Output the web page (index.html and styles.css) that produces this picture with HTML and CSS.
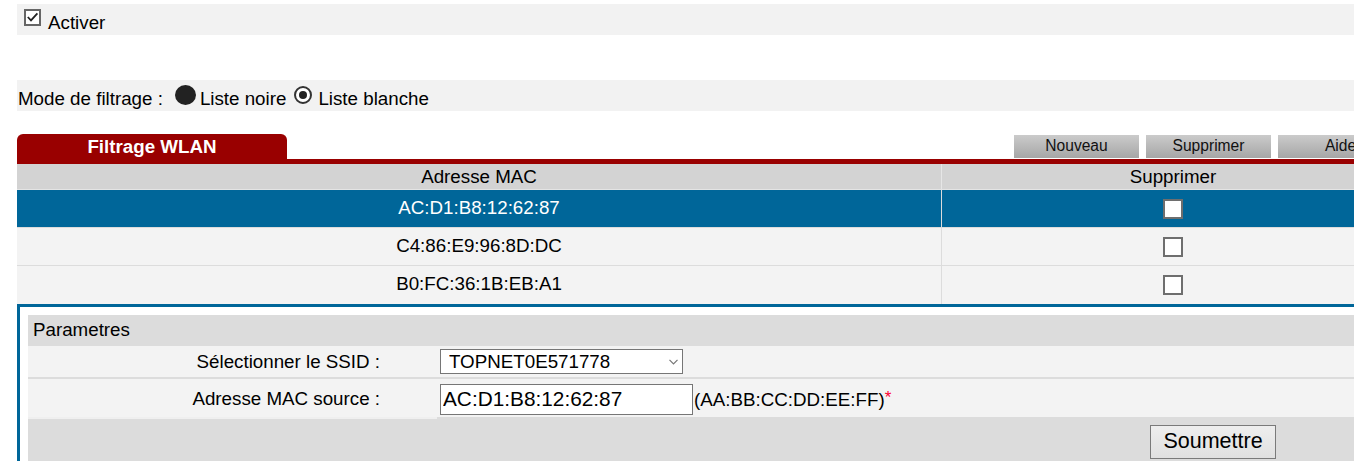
FILE: index.html
```html
<!DOCTYPE html>
<html lang="fr">
<head>
<meta charset="utf-8">
<title>Filtrage WLAN</title>
<link rel="stylesheet" href="styles.css">
</head>
<body>
<div class="page">
  <div class="band band-enable">
    <span class="check"><svg viewBox="0 0 13 13" width="13" height="13"><path d="M1.8 6 L5 9.4 L11.4 2.4" fill="none" stroke="#222" stroke-width="1.8"/></svg></span>
    <span class="band-text">Activer</span>
  </div>

  <div class="band band-mode">
    <span class="band-text">Mode de filtrage :</span>
    <span class="radio-black"></span>
    <span class="band-text lbl-noire">Liste noire</span>
    <span class="radio-sel"><span class="radio-dot"></span></span>
    <span class="band-text lbl-blanche">Liste blanche</span>
  </div>

  <div class="tabbar">
    <div class="tab">Filtrage WLAN</div>
    <div class="tools">
      <button class="tool-btn" type="button">Nouveau</button>
      <button class="tool-btn" type="button">Supprimer</button>
      <button class="tool-btn" type="button">Aide</button>
    </div>
  </div>
  <div class="redbar"></div>

  <div class="list">
    <div class="list-row list-head">
      <div class="cell cell-mac">Adresse MAC</div>
      <div class="cell cell-del">Supprimer</div>
    </div>
    <div class="list-row list-item selected">
      <div class="cell cell-mac">AC:D1:B8:12:62:87</div>
      <div class="cell cell-del"><span class="box"></span></div>
    </div>
    <div class="list-row list-item">
      <div class="cell cell-mac">C4:86:E9:96:8D:DC</div>
      <div class="cell cell-del"><span class="box"></span></div>
    </div>
    <div class="list-row list-item last">
      <div class="cell cell-mac">B0:FC:36:1B:EB:A1</div>
      <div class="cell cell-del"><span class="box"></span></div>
    </div>
  </div>

  <div class="editbox">
    <div class="params">
      <div class="params-head">Parametres</div>
      <div class="frow frow-ssid">
        <div class="flabel">Sélectionner le SSID :</div>
        <div class="fvalue">
          <span class="select-wrap">
            <select class="ssid-select"><option>TOPNET0E571778</option></select>
            <svg class="chev" viewBox="0 0 9 6" width="9" height="6"><path d="M0.5 0.8 L4.5 4.8 L8.5 0.8" fill="none" stroke="#777" stroke-width="1.2"/></svg>
          </span>
        </div>
      </div>
      <div class="frow frow-mac">
        <div class="flabel">Adresse MAC source :</div>
        <div class="fvalue">
          <input class="mac-input" type="text" value="AC:D1:B8:12:62:87">
          <span class="hint">(AA:BB:CC:DD:EE:FF)<span class="req">*</span></span>
        </div>
      </div>
      <div class="submit-row">
        <button class="submit-btn" type="button">Soumettre</button>
      </div>
    </div>
  </div>
</div>
</body>
</html>
```

FILE: styles.css
```css
html, body {
  margin: 0;
  padding: 0;
  overflow: hidden;
  background: #ffffff;
}

body {
  font-family: "Liberation Sans", Arial, sans-serif;
  font-size: 18.75px;
  color: #000;
}

.page {
  width: 1387px;
  padding: 4px 0 0 17px;
}

/* top bands */
.band {
  height: 31px;
  background: #f2f2f2;
  display: flex;
  align-items: flex-start;
}

.band-text {
  line-height: 22px;
  margin-top: 8px;
  white-space: pre;
}

.band-enable {
  padding-left: 7px;
}

.check {
  width: 17px;
  height: 17px;
  flex: none;
  box-sizing: border-box;
  border: 2px solid #666;
  background: #fff;
  margin-top: 5px;
  margin-right: 7px;
  display: flex;
}

.band-mode {
  margin-top: 45px;
  padding-left: 1px;
}

.radio-black {
  width: 21px;
  height: 20px;
  flex: none;
  border-radius: 50%;
  background: #222;
  margin: 5px 4px 0 12px;
}

.radio-sel {
  width: 18px;
  height: 18px;
  flex: none;
  box-sizing: border-box;
  border: 2px solid #333;
  border-radius: 50%;
  background: #fff;
  margin: 6px 6px 0 8px;
  display: flex;
  align-items: center;
  justify-content: center;
}

.radio-dot {
  width: 8px;
  height: 8px;
  border-radius: 50%;
  background: #222;
}

/* tab bar */
.tabbar {
  margin-top: 23px;
  height: 25px;
  display: flex;
  justify-content: space-between;
  align-items: flex-end;
}

.tab {
  width: 270px;
  height: 25px;
  box-sizing: border-box;
  padding-top: 1px;
  background: #990000;
  border-radius: 6px 6px 0 0;
  color: #fff;
  font-weight: bold;
  text-align: center;
  line-height: 24px;
}

.tools {
  display: flex;
  gap: 7px;
  margin: 0 1px 1px 0;
}

.tool-btn {
  width: 125px;
  height: 23px;
  padding: 0 0 1px 0;
  border: none;
  background: linear-gradient(#cbcbcb, #a6a6a6);
  font-family: "Liberation Sans", Arial, sans-serif;
  font-size: 15.6px;
  color: #111;
  line-height: 22px;
}

.redbar {
  height: 5px;
  background: #990000;
}

/* list */
.list-row {
  display: grid;
  grid-template-columns: 925px 1fr;
  text-align: center;
}

.list-head {
  height: 26px;
  box-sizing: border-box;
  background: #d3d3d3;
  border-bottom: 1px solid #e4e4e4;
  line-height: 25px;
}

.list-head .cell-mac {
  border-right: 1px solid #e6e6e6;
}

.list-item {
  height: 38px;
  box-sizing: border-box;
  background: #f3f3f3;
  border-bottom: 1px solid #dcdcdc;
  line-height: 36px;
}

.list-item.last {
  border-bottom: none;
}

.list-item .cell-mac {
  border-right: 1px solid #dcdcdc;
}

.list-item.selected {
  background: #006699;
  color: #fff;
}

.cell-del {
  display: flex;
  align-items: center;
  justify-content: center;
}

.box {
  width: 20px;
  height: 20px;
  box-sizing: border-box;
  border: 2px solid #6e6e6e;
  background: #fff;
}

/* edit box */
.editbox {
  border-top: 3px solid #006699;
  border-left: 3px solid #006699;
  padding: 8px 0 0 8px;
}

.params {
  background: #dcdcdc;
  display: flex;
  flex-direction: column;
}

.params-head {
  height: 31px;
  line-height: 29px;
  padding-left: 5px;
}

.frow {
  display: grid;
  grid-template-columns: 409px 1fr;
  background: #f3f3f3;
}

.frow-ssid {
  height: 31px;
  margin-bottom: 2px;
}

.frow-mac {
  height: 40px;
}

.flabel {
  text-align: right;
  padding-right: 57px;
  display: flex;
  align-items: center;
  justify-content: flex-end;
}

.frow-ssid .flabel {
  padding-top: 1px;
}

.frow-mac .flabel {
  padding-top: 2px;
  border-bottom: 2px solid #efefef;
}

.fvalue {
  padding-left: 3px;
  display: flex;
  align-items: center;
}

.frow-mac .fvalue {
  border-bottom: 2px solid #dcdcdc;
}

.select-wrap {
  position: relative;
  display: inline-flex;
}

.ssid-select {
  appearance: none;
  -webkit-appearance: none;
  width: 243px;
  height: 25px;
  box-sizing: border-box;
  border: 1px solid #767676;
  border-radius: 0;
  background: #fff;
  padding: 0 0 0 8px;
  font-family: "Liberation Sans", Arial, sans-serif;
  font-size: 18.75px;
  color: #000;
  line-height: 23px;
}

.chev {
  position: absolute;
  right: 5px;
  top: 10px;
}

.mac-input {
  width: 253px;
  height: 31px;
  box-sizing: border-box;
  border: 1px solid #767676;
  border-radius: 0;
  margin: 2px 0 0 0;
  padding: 0 0 0 2px;
  font-family: "Liberation Sans", Arial, sans-serif;
  font-size: 20.8px;
  color: #000;
  background: #fff;
}

.hint {
  margin: 2px 0 0 1px;
}

.req {
  color: #ff0033;
  font-size: 17px;
  vertical-align: 3px;
}

.submit-row {
  height: 50px;
  padding: 6px 0 0 1122px;
}

.submit-btn {
  width: 126px;
  height: 34px;
  box-sizing: border-box;
  border: 1px solid #7a7a7a;
  border-radius: 0;
  background: linear-gradient(#eeeeee, #e0e0e0);
  padding: 0 0 2px 0;
  font-family: "Liberation Sans", Arial, sans-serif;
  font-size: 21.5px;
  color: #000;
}
```
